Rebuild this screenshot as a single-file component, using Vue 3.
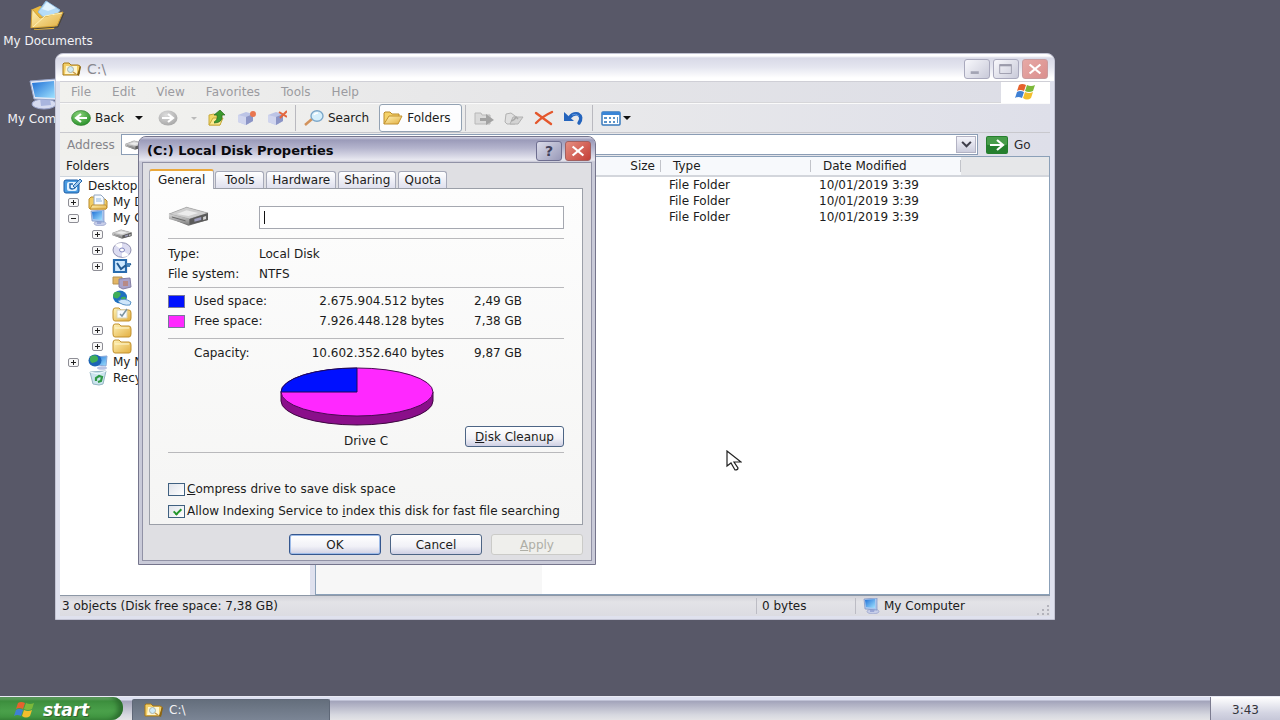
<script setup>
import { ref } from 'vue'

const menus = ['File', 'Edit', 'View', 'Favorites', 'Tools', 'Help']
const tabs = ['General', 'Tools', 'Hardware', 'Sharing', 'Quota']
const activeTab = ref('General')
const volumeLabel = ref('')
const address = ref('')
const compress = ref(false)
const indexing = ref(true)

const tree = [
  { level: 0, icon: 'desktop', label: 'Desktop' },
  { level: 1, icon: 'docs', label: 'My Documents', toggle: '+' },
  { level: 1, icon: 'computer', label: 'My Computer', toggle: '-' },
  { level: 2, icon: 'drive', toggle: '+' },
  { level: 2, icon: 'cd', toggle: '+' },
  { level: 2, icon: 'control', toggle: '+' },
  { level: 2, icon: 'scanner' },
  { level: 2, icon: 'globe' },
  { level: 2, icon: 'fonts' },
  { level: 2, icon: 'folder', toggle: '+' },
  { level: 2, icon: 'folder', toggle: '+' },
  { level: 1, icon: 'network', label: 'My Network Places', toggle: '+' },
  { level: 1, icon: 'bin', label: 'Recycle Bin' },
]

const files = [
  { type: 'File Folder', date: '10/01/2019 3:39' },
  { type: 'File Folder', date: '10/01/2019 3:39' },
  { type: 'File Folder', date: '10/01/2019 3:39' },
]
</script>

<template>
  <div class="desktop">
    <svg class="defs" aria-hidden="true">
      <defs>
        <linearGradient id="gFolder" x1="0" y1="0" x2="1" y2="1">
          <stop offset="0" stop-color="#fff3b8" /><stop offset="1" stop-color="#e2ae3f" />
        </linearGradient>
        <linearGradient id="gScreen" x1="0" y1="0" x2="1" y2="1">
          <stop offset="0" stop-color="#1f6fd6" /><stop offset="1" stop-color="#9fe2ff" />
        </linearGradient>
        <radialGradient id="gGreen" cx=".4" cy=".3" r=".8">
          <stop offset="0" stop-color="#8bd27a" /><stop offset="1" stop-color="#1f8a22" />
        </radialGradient>
        <radialGradient id="gGrey" cx=".4" cy=".3" r=".8">
          <stop offset="0" stop-color="#dcdcdc" /><stop offset="1" stop-color="#a2a2a2" />
        </radialGradient>
        <linearGradient id="gMetal" x1="0" y1="0" x2="0" y2="1">
          <stop offset="0" stop-color="#d8d8d8" /><stop offset="1" stop-color="#808080" />
        </linearGradient>
      </defs>
      <symbol id="folder" viewBox="0 0 20 16">
        <path d="M1 5q0-3 2-3h4l2 2h8q2 0 2 3v5q0 3-2 3H3q-2 0-2-3z" fill="url(#gFolder)" stroke="#c2912f" />
        <path d="M3 6h14" stroke="#fff8d2" />
      </symbol>
      <symbol id="openfolder" viewBox="0 0 20 16">
        <path d="M1 14V3l1-1h5l2 2h7v3" fill="#f5d269" stroke="#b98a2a" />
        <path d="M1 14 6 6h13l-4 8z" fill="url(#gFolder)" stroke="#c2912f" />
      </symbol>
      <symbol id="searchfolder" viewBox="0 0 20 16">
        <path d="M1 14V3l1-1h5l2 2h7l2 1-1 8-2 1z" fill="#f3cf68" stroke="#a67818" />
        <path d="M15 14 18 5l1 1-2 9z" fill="#8a6414" />
        <path d="M4 5h11v8H3z" fill="#fff6cf" />
        <circle cx="8.500" cy="8.500" r="3" fill="#cfeaf6" stroke="#a9b4ae" />
        <path d="m11 11 3 2" stroke="#c99a45" stroke-width="1.500" />
      </symbol>
      <symbol id="docs" viewBox="0 0 20 16">
        <path d="M1 14V5l2-2h4l2 2h8l2 2v6l-1 2H2z" fill="#f1cc62" stroke="#b98a2a" />
        <path d="M6 1h7l3 3v8H6z" fill="#f7fbff" stroke="#92a6c0" />
        <path d="M8 5h5M8 7h6" stroke="#8fb4dd" />
        <path d="M4 11h14l1 3-1 1H2z" fill="url(#gFolder)" stroke="#c2912f" />
      </symbol>
      <symbol id="computer" viewBox="0 0 20 16">
        <ellipse cx="12" cy="13.500" rx="6" ry="2.300" fill="#c7cee9" stroke="#8b97c4" stroke-width=".6" />
        <path d="m9 10 5 1-1 3H9z" fill="#9aa7d6" />
        <path d="m3 1 13-1v12L4 11z" fill="#a9c6ee" stroke="#7c91c2" stroke-width=".7" />
        <path d="m4 2 10-1v9L5 9z" fill="url(#gScreen)" />
      </symbol>
      <symbol id="desktop" viewBox="0 0 20 16">
        <rect x="1" y="2" width="15" height="13" rx="2" fill="#4a9be0" stroke="#1b5ca6" />
        <rect x="4" y="4" width="10" height="9" rx="2" fill="#e4f3ff" />
        <path d="M10 6H7v4q2 2 5 0" fill="none" stroke="#2468ad" stroke-width="1.500" />
        <path d="m10 8 7-7 2 2-7 7z" fill="#9cc7ee" stroke="#2468ad" />
      </symbol>
      <symbol id="drive" viewBox="0 0 42 20">
        <path d="M1 8 19 1l22 6v7l-20 6L1 12z" fill="#777" />
        <path d="M1 8 19 1l22 6-19 6z" fill="#cfcfcf" stroke="#a0a0a0" stroke-width=".6" />
        <path d="M9 8 19 4l12 3-10 3z" fill="#ececec" />
        <path d="m1 8 21 5v6L1 13z" fill="url(#gMetal)" />
        <path d="m22 13 19-6v7l-19 5z" fill="#5b5b5b" />
        <path d="m27 13 7-2v3l-7 2z" fill="#9d9dbb" />
        <path d="m36 11 3-1v3l-3 1z" fill="#d6d6d6" />
        <path d="m4 11 14 4" stroke="#666" />
      </symbol>
      <symbol id="cd" viewBox="0 0 20 16">
        <ellipse cx="10" cy="8" rx="9" ry="7.300" fill="#dcdcf1" stroke="#8f8fae" />
        <path d="M10 8 3 3a9 7 0 0 1 7-2zm0 0 7 5a9 7 0 0 1-7 2z" fill="#fff" />
        <ellipse cx="10" cy="8" rx="2.500" ry="2" fill="#fff" stroke="#7f83bd" />
      </symbol>
      <symbol id="control" viewBox="0 0 20 16">
        <path d="M2 2h12v12H2z" fill="#cfe9ff" stroke="#2a6cae" stroke-width="2.200" />
        <path d="m5 5 4 6 4-3 6-2" fill="none" stroke="#245c93" stroke-width="2" />
        <path d="M14 5h4v4h-3z" fill="#4c86bb" />
      </symbol>
      <symbol id="scanner" viewBox="0 0 20 16">
        <path d="M1 3h9v7H1z" fill="#e3b665" stroke="#b89350" />
        <path d="m7 5 11-1 1 9-8 2-4-2z" fill="#a9a3c9" stroke="#8580a6" />
        <path d="M11 7h5v5h-5z" fill="#b78a86" />
      </symbol>
      <symbol id="globe" viewBox="0 0 20 16">
        <ellipse cx="8" cy="7" rx="7" ry="6.500" fill="#1f6fc0" />
        <path d="M3 2c5-1 7 2 5 4s-2 3-5 2-2-5 0-6m6 6c2-2 5-1 5 0s-4 3-5 3z" fill="#3fae58" />
        <path d="M6 11q6-4 13 1l-1 3q-8 1-12-4" fill="#cfe6fa" stroke="#5b94c6" />
      </symbol>
      <symbol id="fonts" viewBox="0 0 20 16">
        <path d="M1 5q0-3 2-3h4l2 2h8q2 0 2 3v5q0 3-2 3H3q-2 0-2-3z" fill="url(#gFolder)" stroke="#c2912f" />
        <path d="M5 4h10v8H5z" fill="#f7fbff" stroke="#d9d4b4" />
        <path d="m8 8 2 2 5-7" fill="none" stroke="#7b93a0" stroke-width="1.500" />
      </symbol>
      <symbol id="network" viewBox="0 0 20 16">
        <path d="m7 3 12-1-1 10-9-1z" fill="url(#gScreen)" stroke="#88a8d8" />
        <ellipse cx="14" cy="14" rx="5" ry="1.800" fill="#b9c3e4" />
        <ellipse cx="7" cy="6.500" rx="6.500" ry="6" fill="#1d64b5" />
        <path d="M3 2q6-2 7 2T4 9Q0 6 3 2" fill="#3fae58" />
      </symbol>
      <symbol id="bin" viewBox="0 0 20 16">
        <path d="m2 2 16-1-3 13-4 1-6-1z" fill="#cbe4ee" stroke="#93b4c2" />
        <path d="m2 2 8 2 8-3" fill="none" stroke="#f4fbff" />
        <path d="M8 11V8l3-2 3 1-1 4-3 1" fill="none" stroke="#2f9a45" stroke-width="2.200" />
      </symbol>
      <symbol id="back" viewBox="0 0 20 16">
        <ellipse cx="10" cy="8" rx="9.500" ry="7.500" fill="url(#gGreen)" stroke="#2b7a2b" stroke-width=".6" />
        <path d="M16 8H6m4-4L5 8l5 4" fill="none" stroke="#fff" stroke-width="2.200" />
      </symbol>
      <symbol id="forward" viewBox="0 0 20 16">
        <ellipse cx="10" cy="8" rx="9.500" ry="7.500" fill="url(#gGrey)" />
        <path d="M4 8h10m-4-4 5 4-5 4" fill="none" stroke="#fff" stroke-width="2.200" />
      </symbol>
      <symbol id="up" viewBox="0 0 20 16">
        <path d="m2 5 5-1 2 1h6l-2 10H2z" fill="#f3d766" stroke="#c8aa3c" />
        <path d="m2 15 4-7h10l-3 7z" fill="#fbe98e" stroke="#c8aa3c" />
        <path d="M7 12q4-2 3-7H7l6-5 5 5h-3q1 8-8 8" fill="#3c9a2c" stroke="#2c6a24" stroke-width=".7" />
      </symbol>
      <symbol id="mapdrive" viewBox="0 0 20 16">
        <path d="m1 5 8-3 7 2v7l-7 4-8-3z" fill="#bcc4e6" />
        <path d="m1 5 8 2v8l-8-3z" fill="#d0d5ee" />
        <path d="m9 7 7-3v7l-7 4z" fill="#8c95c6" />
        <circle cx="16" cy="4" r="3" fill="#e9764f" />
      </symbol>
      <symbol id="unmapdrive" viewBox="0 0 20 16">
        <path d="m1 5 8-3 7 2v7l-7 4-8-3z" fill="#bcc4e6" />
        <path d="m1 5 8 2v8l-8-3z" fill="#d0d5ee" />
        <path d="m9 7 7-3v7l-7 4z" fill="#8c95c6" />
        <path d="m12 2 8 5m0-6-7 7" stroke="#e4673f" stroke-width="2" />
      </symbol>
      <symbol id="search" viewBox="0 0 20 16">
        <path d="m8 9-7 6" stroke="#d2925c" stroke-width="2.500" />
        <ellipse cx="13" cy="6" rx="6" ry="5.200" fill="#d5effc" stroke="#7ca7c9" stroke-width="1.400" />
        <path d="M10 5q1-2 4-2" fill="none" stroke="#fff" stroke-width="1.500" />
      </symbol>
      <symbol id="moveto" viewBox="0 0 20 16">
        <path d="M1 14V3h6l1 2h8v9z" fill="#dadada" stroke="#b8b8b8" />
        <path d="M6 8h6V4l8 6-8 5v-4H6z" fill="#a2a2a2" />
      </symbol>
      <symbol id="copyto" viewBox="0 0 20 16">
        <path d="m1 12 1-8 5-1 4 3v8H3z" fill="#e0e0e0" stroke="#b2b2b2" />
        <path d="m6 14 3-7h10l-5 7z" fill="#d3d3d3" stroke="#b2b2b2" />
        <path d="M7 11q4-1 5-4l2 2" fill="none" stroke="#a9a9a9" stroke-width="1.500" />
      </symbol>
      <symbol id="delete" viewBox="0 0 20 16">
        <path d="m2 3 15 11M18 2Q9 6 2 13" fill="none" stroke="#e4572c" stroke-width="2.400" stroke-linecap="round" />
      </symbol>
      <symbol id="undo" viewBox="0 0 20 16">
        <path d="M6 7q3-4 8-3 5 3 1 9" fill="none" stroke="#2464bd" stroke-width="3.400" stroke-linecap="round" />
        <path d="M0 2v9h10z" fill="#2464bd" />
        <path d="M8 5q4-2 7 1" fill="none" stroke="#5d97e2" />
      </symbol>
      <symbol id="views" viewBox="0 0 20 16">
        <rect x="1" y="2" width="18" height="13" rx="1" fill="#fff" stroke="#3779bd" stroke-width="1.500" />
        <path d="M1 3.500h18" stroke="#3a85d6" stroke-width="3" />
        <path d="M3 7h3v2H3zm5 0h2v2H8zm4 0h2v2h-2zm-9 4h3v2H3zm5 0h2v2H8zm4 0h2v2h-2zM16 7h1v6h-1z" fill="#5b93c8" />
      </symbol>
      <symbol id="flag" viewBox="0 0 24 18">
        <path d="M5 2q3-2 7 0l-2 6Q6 6 3 8z" fill="#e5622d" />
        <path d="M13 2q4 2 8 0l-2 6q-4 2-8 0z" fill="#7cb83a" />
        <path d="M3 9q3-2 7 0l-2 6q-4-2-7 0z" fill="#3f80d4" />
        <path d="M11 9q4 2 8 0l-2 6q-4 3-8 0z" fill="#f3be2c" />
      </symbol>
    </svg>

    <nav class="shortcuts">
      <button class="shortcut">
        <svg viewBox="0 0 40 32">
          <path d="m5 9 7-3 5 2 14 3-5 18-20 1z" fill="#e9b83f" />
          <path d="m10 12 8-11 14 9-9 14z" fill="#b5dcf8" stroke="#8fbbe0" />
          <path d="m14 9 5-7 9 6-8 3z" fill="#e2f4ff" />
          <path d="m3 28 1-19 8 9 23-6-6 14z" fill="url(#gFolder)" stroke="#cf9f35" />
          <path d="m5 27 12-11 17-3" fill="none" stroke="#fff3b8" />
          <path d="m3 29 27-2 6-14" fill="none" stroke="#4a4436" />
        </svg>
        <span>My Documents</span>
      </button>
      <button class="shortcut">
        <svg viewBox="0 0 40 32">
          <ellipse cx="16" cy="26" rx="12" ry="5" fill="#d6dbf0" stroke="#9aa4cc" />
          <path d="m12 20 10 1 1 6-10 1z" fill="#a9b5de" />
          <path d="m2 3 26-2 1 21-23-1z" fill="#e4e9f6" stroke="#99a7cc" />
          <path d="m4 5 22-2 1 17-20-1z" fill="url(#gScreen)" />
        </svg>
        <span>My Computer</span>
      </button>
    </nav>

    <section class="explorer">
      <header class="ex-title">
        <svg class="ic"><use href="#searchfolder" /></svg>
        <span class="ex-name">C:\</span>
        <div class="caption">
          <button aria-label="Minimize" class="cap"><svg viewBox="0 0 26 20"><path d="M6 14h9" stroke="#a3a4b4" stroke-width="3" /></svg></button>
          <button aria-label="Maximize" class="cap"><svg viewBox="0 0 26 20"><path d="M6 5h13v10H6z" fill="none" stroke="#9b9bab" /><path d="M6 6h13" stroke="#9b9bab" stroke-width="2" /></svg></button>
          <button aria-label="Close" class="cap cap-close"><svg viewBox="0 0 26 20"><path d="m7 5 12 10M19 5 7 15" stroke="#fff" stroke-width="2.500" /></svg></button>
        </div>
      </header>

      <div class="menubar">
        <button v-for="m in menus" :key="m">{{ m }}</button>
        <div class="throbber"><svg viewBox="0 0 24 18"><use href="#flag" /></svg></div>
      </div>

      <div class="toolbar">
        <div class="group">
          <button class="back"><svg class="ic"><use href="#back" /></svg>Back<i class="arrow"></i></button>
          <button class="fwd" aria-label="Forward"><svg class="ic"><use href="#forward" /></svg><i class="arrow dim"></i></button>
          <button aria-label="Up"><svg class="ic"><use href="#up" /></svg></button>
          <button aria-label="Map drive"><svg class="ic"><use href="#mapdrive" /></svg></button>
          <button aria-label="Disconnect drive"><svg class="ic"><use href="#unmapdrive" /></svg></button>
        </div>
        <div class="group mid">
          <button><svg class="ic"><use href="#search" /></svg>Search</button>
          <button class="pressed"><svg class="ic"><use href="#openfolder" /></svg>Folders</button>
        </div>
        <div class="group">
          <button aria-label="Move to"><svg class="ic"><use href="#moveto" /></svg></button>
          <button aria-label="Copy to"><svg class="ic"><use href="#copyto" /></svg></button>
          <button aria-label="Delete"><svg class="ic"><use href="#delete" /></svg></button>
          <button aria-label="Undo"><svg class="ic"><use href="#undo" /></svg></button>
        </div>
        <div class="group views">
          <button aria-label="Views"><svg class="ic"><use href="#views" /></svg><i class="arrow"></i></button>
        </div>
      </div>

      <div class="address">
        <label for="addr">Address</label>
        <div class="addr-field">
          <svg class="ic"><use href="#drive" /></svg>
          <input id="addr" v-model="address" type="text" />
          <button class="drop" aria-label="Open list"><svg viewBox="0 0 12 8"><path d="m1 1 5 5 5-5" fill="none" stroke="#3e3e4a" stroke-width="2.400" /></svg></button>
        </div>
        <button class="go">
          <svg viewBox="0 0 22 18"><rect width="22" height="18" rx="2" fill="#257f2e" /><rect x="1" y="1" width="20" height="8" rx="1" fill="#479c4a" /><path d="M4 9h12m-5-5 6 5-6 5" fill="none" stroke="#fff" stroke-width="2.200" /></svg>
          Go
        </button>
      </div>

      <div class="ex-body">
        <aside class="folders">
          <h2>Folders</h2>
          <ul>
            <li v-for="(n, i) in tree" :key="i" :class="'lv' + n.level">
              <span v-if="n.level" class="slot"><button v-if="n.toggle" class="toggle" :class="{ open: n.toggle === '-' }" :aria-label="n.toggle === '-' ? 'Collapse' : 'Expand'"></button></span>
              <svg class="ic"><use :href="'#' + n.icon" /></svg>
              <span v-if="n.label" class="node">{{ n.label }}</span>
            </li>
          </ul>
        </aside>
        <div class="list">
          <table>
            <colgroup><col class="c-name" /><col class="c-size" /><col class="c-type" /><col class="c-date" /><col /></colgroup>
            <thead>
              <tr><th></th><th class="right">Size</th><th>Type</th><th>Date Modified</th><th class="rest"></th></tr>
            </thead>
            <tbody>
              <tr v-for="(f, i) in files" :key="i"><td></td><td></td><td>{{ f.type }}</td><td>{{ f.date }}</td><td></td></tr>
            </tbody>
          </table>
          <div class="sorted"></div>
        </div>
      </div>

      <footer class="status">
        <span class="st-main">3 objects (Disk free space: 7,38 GB)</span>
        <span class="st-size">0 bytes</span>
        <span class="st-zone"><svg class="ic"><use href="#computer" /></svg>My Computer</span>
        <svg class="grip" viewBox="0 0 15 12"><path d="M12 1h2v2h-2zM7 5h2v2H7zm5 0h2v2h-2zM2 9h2v2H2zm5 0h2v2H7zm5 0h2v2h-2z" fill="#b3b3bb" /></svg>
      </footer>
    </section>

    <section class="dialog" role="dialog" aria-labelledby="dlg-title">
      <header class="dlg-title">
        <h1 id="dlg-title">(C:) Local Disk Properties</h1>
        <button class="cap help" aria-label="Help">?</button>
        <button class="cap close" aria-label="Close"><svg viewBox="0 0 26 20"><path d="m7 5 12 10M19 5 7 15" stroke="#fff" stroke-width="2.500" /></svg></button>
      </header>
      <div class="dlg-body">
        <div class="tabs" role="tablist">
          <button v-for="t in tabs" :key="t" role="tab" :aria-selected="t === activeTab" :class="{ active: t === activeTab }" @click="activeTab = t">{{ t }}</button>
        </div>
        <div class="panel">
          <div class="sec volume">
            <svg class="disk"><use href="#drive" /></svg>
            <div class="vol-field"><i class="caret"></i><input v-model="volumeLabel" type="text" aria-label="Volume label" /></div>
          </div>
          <div class="sec kind">
            <div class="row"><span>Type:</span><span>Local Disk</span></div>
            <div class="row"><span>File system:</span><span>NTFS</span></div>
          </div>
          <div class="sec space">
            <div class="usage"><i class="swatch used"></i><span>Used space:</span><span class="bytes">2.675.904.512 bytes</span><span>2,49 GB</span></div>
            <div class="usage"><i class="swatch free"></i><span>Free space:</span><span class="bytes">7.926.448.128 bytes</span><span>7,38 GB</span></div>
          </div>
          <div class="sec total">
            <div class="usage"><i></i><span>Capacity:</span><span class="bytes">10.602.352.640 bytes</span><span>9,87 GB</span></div>
            <div class="chart">
              <svg class="pie" viewBox="0 0 154 60">
                <path d="M1 25v9a76 24 0 0 0 152 0v-9z" fill="#8a0f8a" stroke="#3d0740" />
                <ellipse cx="77" cy="25" rx="76" ry="24" fill="#ff28ff" stroke="#4a0a52" />
                <path d="M77 25V1A76 24 0 0 0 1 25z" fill="#0010ff" stroke="#1a0a5a" />
              </svg>
              <span class="drive-name">Drive C</span>
              <button class="btn cleanup"><u>D</u>isk Cleanup</button>
            </div>
          </div>
          <div class="checks">
            <label><input v-model="compress" type="checkbox" /><span><u>C</u>ompress drive to save disk space</span></label>
            <label><input v-model="indexing" type="checkbox" /><span>Allow Indexing Service to <u>i</u>ndex this disk for fast file searching</span></label>
          </div>
        </div>
        <div class="actions">
          <button class="btn default">OK</button>
          <button class="btn">Cancel</button>
          <button class="btn" disabled><u>A</u>pply</button>
        </div>
      </div>
    </section>

    <svg class="pointer" viewBox="0 0 16 21"><path d="M1 1v15l4-3 4 7q3 0 3-2l-4-6h7z" fill="#fff" stroke="#222" stroke-width="1.200" /></svg>

    <footer class="taskbar">
      <button class="start"><svg viewBox="0 0 24 18"><use href="#flag" /></svg>start</button>
      <button class="task"><svg class="ic"><use href="#searchfolder" /></svg>C:\</button>
      <div class="tray">3:43</div>
    </footer>
  </div>
</template>

<style>
body { overflow: hidden; }
</style>

<style scoped>
.desktop {
  position: relative;
  display: flex;
  flex-direction: column;
  justify-content: space-between;
  height: 100vh;
  background: #585868;
  overflow: hidden;
  font: 12px/16px "DejaVu Sans", sans-serif;
  color: #1c1c20;
}
.defs { position: absolute; width: 0; height: 0; }
* { box-sizing: border-box; }
button, input { font: inherit; color: inherit; margin: 0; padding: 0; border: 0; background: none; border-radius: 0; outline: 0; }
svg { display: block; flex: none; }
.ic { width: 20px; height: 16px; }

.shortcuts { display: flex; flex-direction: column; gap: 29px; width: 96px; }
.shortcut { display: flex; flex-direction: column; align-items: center; gap: 1px; color: #f2f2f6; white-space: nowrap; }
.shortcut svg { width: 40px; height: 32px; }

/* Explorer window */
.explorer {
  position: absolute;
  inset: 53px 225px 100px 55px;
  display: flex;
  flex-direction: column;
  border: 1px solid #c3c4d4;
  border-radius: 8px 8px 0 0;
  background: #dfe1ee;
  padding: 0 4px 3px;
}
.ex-title {
  display: flex;
  align-items: center;
  gap: 5px;
  height: 27px;
  margin: 0 -4px;
  padding: 3px 6px 0;
  border-radius: 8px 8px 0 0;
  background: linear-gradient(#fff 0, #fff 2px, #d8d9e7 4px, #e4e5ef 13px, #fff 24px);
  color: #88888f;
}
.ex-name { flex: 1; font-size: 14px; }
.caption { display: flex; gap: 3px; }
.cap { width: 26px; height: 20px; border: 1px solid #a9a9bd; border-radius: 3px; background: linear-gradient(135deg, #f8f8fc, #c9cad9); }
.cap svg { width: 24px; height: 18px; }
.cap-close { border-color: #c99c9f; background: linear-gradient(135deg, #e7a9a6, #da8f8e); }
.menubar {
  display: flex;
  align-items: center;
  gap: 21px;
  height: 22px;
  padding-left: 11px;
  border-top: 1px solid #cfcfd6;
  border-bottom: 1px solid #d6d6d9;
  background: linear-gradient(90deg, #f1f1ee, #e6e6e8 45%, #dcdde6);
  color: #9b9ba0;
}
.throbber { display: flex; align-items: center; justify-content: center; width: 49px; height: 21px; margin-left: auto; background: #fff; }
.throbber svg { width: 26px; height: 18px; }
.toolbar {
  display: flex;
  align-items: center;
  height: 30px;
  padding-left: 3px;
  border-top: 1px solid #fafafa;
  border-bottom: 1px solid #c8c8cd;
  background: linear-gradient(90deg, #f2f2ef, #ebebeb 45%, #dedfe9);
}
.group { display: flex; align-items: center; gap: 10px; padding: 0 8px; height: 26px; }
.group + .group { border-left: 1px solid #b9b9bf; }
.group.mid { padding-right: 3px; }
.group button { display: flex; align-items: center; gap: 4px; }
.group.views button { gap: 2px; }
.arrow { border: 4px solid transparent; border-top-color: #111; border-bottom: 0; }
.arrow.dim { border-width: 3px; border-bottom: 0; border-top-color: #bababa; }
.group .back { width: 77px; }
.back .arrow { margin-left: auto; margin-right: 5px; }
.group .fwd { width: 39px; justify-content: space-between; }
.group .pressed { height: 28px; width: 83px; padding: 0 3px; border: 1px solid #93a2b3; border-radius: 3px; background: #fdfdfe; }
.address {
  display: flex;
  align-items: center;
  height: 23px;
  padding-left: 7px;
  background: linear-gradient(90deg, #f0f0ed, #e9e9ea 45%, #dedfe9);
  color: #85858b;
}
.address label { width: 54px; }
.addr-field { display: flex; align-items: center; flex: 1; height: 21px; padding: 0 1px 0 3px; border: 1px solid #8b9db5; background: #fff; }
.addr-field .ic { height: 10px; }
.addr-field input { flex: 1; min-width: 0; }
.drop { display: flex; align-items: center; justify-content: center; width: 20px; height: 17px; border: 1px solid #b3b3c4; background: linear-gradient(#f4f4fa, #cccddd); }
.drop svg { width: 11px; height: 7px; }
.go { display: flex; align-items: center; gap: 6px; width: 72px; padding-left: 8px; color: #2a2a2e; }
.go svg { width: 22px; height: 18px; }

.ex-body { display: flex; flex: 1; min-height: 0; border-bottom: 1px solid #8d98a6; }
.folders { width: 250px; flex: none; background: #fff; overflow: hidden; }
.folders h2 { margin: 0; height: 21px; padding: 2px 6px; background: #f0f0ee; border-bottom: 1px solid #cfd6de; font: inherit; }
.folders ul { list-style: none; margin: 0; padding: 1px 0 0 3px; }
.folders li { display: flex; align-items: center; gap: 5px; height: 16px; white-space: nowrap; }
.node { max-width: 64px; overflow: hidden; }
.slot { display: flex; justify-content: center; width: 19px; }
.lv1 { padding-left: 1px; }
.lv2 { padding-left: 25px; }
.toggle { position: relative; width: 11px; height: 9px; border: 1px solid #8e8e96; border-radius: 2px; background: #f8f8f8; }
.toggle::before { content: ""; position: absolute; inset: 3px 2px; background: #222; }
.toggle:not(.open)::after { content: ""; position: absolute; inset: 1px 4px; background: #222; }
.list { position: relative; flex: 1; min-width: 0; margin-left: 5px; border: 1px solid #8ba0b8; background: #fff; }
.sorted { position: absolute; left: 0; top: 20px; bottom: 0; width: 226px; background: #f7f7f7; }
table { width: 100%; table-layout: fixed; border-collapse: collapse; }
.c-name { width: 226px; }
.c-size { width: 119px; }
.c-type, .c-date { width: 150px; }
th, td { padding: 0; text-align: left; font-weight: normal; white-space: nowrap; }
th { position: relative; height: 19px; padding-left: 12px; background: #f7f9fc; border-bottom: 2px solid #d3d6dc; }
th:not(.rest)::after { content: ""; position: absolute; right: 0; top: 3px; height: 12px; border-right: 1px solid #c2c4ca; }
th.right { text-align: right; padding-right: 6px; }
th.rest { background: #e6e7e9; }
td { height: 16px; padding-left: 8px; }

.status { display: flex; align-items: center; height: 20px; background: linear-gradient(#d2d2d8, #e3e3e7 30%, #dcdce2); }
.status > span { display: flex; align-items: center; height: 16px; }
.st-main { flex: 1; padding-left: 2px; }
.st-size { width: 99px; padding-left: 5px; border-left: 1px solid #bcbcc4; }
.st-zone { gap: 3px; width: 180px; padding-left: 5px; border-left: 1px solid #bcbcc4; }
.grip { width: 15px; height: 12px; align-self: flex-end; }

/* Properties dialog */
.dialog {
  position: absolute;
  left: 138px;
  top: 136px;
  width: 458px;
  border: 1px solid #75758c;
  border-radius: 8px 8px 0 0;
  background: #c9cad8;
  padding: 0 3px 3px;
}
.dlg-title {
  display: flex;
  align-items: center;
  gap: 3px;
  height: 25px;
  margin: 0 -3px;
  padding: 2px 4px 0 8px;
  border-radius: 7px 7px 0 0;
  background: linear-gradient(#d6d6e6 0, #9b9bb9 3px, #b4b4cd 11px, #e9e9f1 23px, #c5c5d4);
}
.dlg-title h1 { flex: 1; margin: 0; font-size: 13px; line-height: 16px; color: #0a0a0e; }
.help { border-color: #6e6e90; background: linear-gradient(135deg, #dcdcea, #9899b8); font-weight: bold; font-size: 14px; line-height: 16px; color: #40405a; }
.close { border-color: #a3605f; background: linear-gradient(135deg, #e58e80, #c53f37); }
.dlg-body { border: 1px solid #9192a6; background: #dfdfe3; padding: 6px 8px 5px 6px; }
.tabs { display: flex; align-items: flex-end; gap: 2px; height: 19px; }
.tabs button { min-width: 49px; height: 17px; padding: 0 5px; border: 1px solid #a6a9b8; border-bottom: 0; border-radius: 3px 3px 0 0; background: linear-gradient(#fff, #dfe0ee); line-height: 16px; }
.tabs .active { position: relative; height: 20px; margin: 0 -1px -1px 0; padding: 0 8px; border-top: 2px solid #eba83a; background: #fdfdfd; }
.panel { border: 1px solid #9b9fa8; background: linear-gradient(#fdfdfd, #f5f5f4); padding: 17px 18px 2px; }
.sec { border-bottom: 1px solid #b9b9bc; }
.volume { display: flex; align-items: flex-start; gap: 50px; padding-bottom: 9px; }
.disk { width: 41px; height: 20px; }
.vol-field { display: flex; align-items: center; flex: 1; height: 23px; padding: 0 4px; border: 1px solid #a5a8b0; background: #fff; }
.vol-field input { flex: 1; }
.caret { width: 1px; height: 13px; background: #111; }
.row, .usage { display: grid; align-items: center; height: 20px; white-space: nowrap; }
.row { grid-template-columns: 91px 1fr; }
.usage { grid-template-columns: 26px 110px 140px 1fr; }
.usage span:last-child { padding-left: 30px; }
.bytes { text-align: right; }
.kind { padding: 5px 0 3px; }
.space { padding: 3px 0 7px; }
.total { padding-top: 4px; }
.swatch { width: 17px; height: 13px; border: 1px solid #77779a; }
.used { background: #0010ff; }
.free { background: #ff28ff; }
.chart { display: grid; grid-template-columns: 1fr 99px; padding-top: 4px; }
.pie { grid-area: 1 / 1 / 2 / 3; width: 154px; height: 60px; margin-left: 112px; }
.drive-name { grid-area: 2 / 1 / 3 / 3; padding: 6px 0 3px; text-align: center; }
.cleanup { grid-area: 1 / 2 / 3 / 3; align-self: end; margin-bottom: 5px; }
.btn { height: 21px; border: 1px solid #4d6585; border-radius: 3px; background: linear-gradient(#fff, #f1f1f7 60%, #cfd0e4); line-height: 16px; white-space: nowrap; }
.btn.default { box-shadow: inset 0 0 0 1px #9dbbe8; border-color: #35578f; }
.btn:disabled { border-color: #cbcbc8; background: #efefec; color: #aeaea6; }
.checks { padding-top: 25px; }
.checks label { display: flex; align-items: center; gap: 2px; height: 22px; white-space: nowrap; }
.checks input { appearance: none; position: relative; flex: none; width: 17px; height: 13px; border: 1px solid #3f6080; background: linear-gradient(135deg, #dfe3ea, #fff); }
.checks input:checked::after { content: ""; position: absolute; left: 6px; top: 1px; width: 3px; height: 6px; border: solid #23962a; border-width: 0 2px 2px 0; transform: rotate(45deg); }
.actions { display: flex; justify-content: flex-end; gap: 9px; padding-top: 9px; }
.actions .btn { width: 92px; }

.pointer { position: absolute; left: 726px; top: 450px; width: 16px; height: 21px; }

.taskbar { display: flex; height: 24px; border-top: 1px solid #e9eaf4; background: linear-gradient(#dcdff0 0, #dcdff0 3px, #a2a3ba 4px, #d7d8e0 18px, #e3e3e6); }
.start {
  display: flex;
  align-items: center;
  gap: 6px;
  width: 123px;
  padding: 2px 0 0 13px;
  border-radius: 0 10px 12px 0;
  background: linear-gradient(#7fb77f 0, #3d8f3e 4px, #4aa04a 14px, #3f9440);
  box-shadow: inset -5px 0 5px #2c6e2e;
  color: #fff;
  font: italic bold 17px/20px "DejaVu Sans", sans-serif;
  text-shadow: 1px 1px 1px #2d5a2d;
}
.start svg { width: 24px; height: 18px; }
.task { display: flex; align-items: center; gap: 5px; width: 198px; margin: 2px 0 0 9px; padding-left: 11px; border: 1px solid #5f6878; border-bottom: 0; border-radius: 2px 2px 0 0; background: linear-gradient(#646e7c, #7b8595); color: #f2f2f4; }
.tray { display: flex; align-items: center; justify-content: center; width: 70px; margin-left: auto; padding-top: 3px; border-left: 1px solid #7c7c90; background: linear-gradient(#fff, #d3d4e2 70%, #c6c7d8); color: #33333a; }
</style>
